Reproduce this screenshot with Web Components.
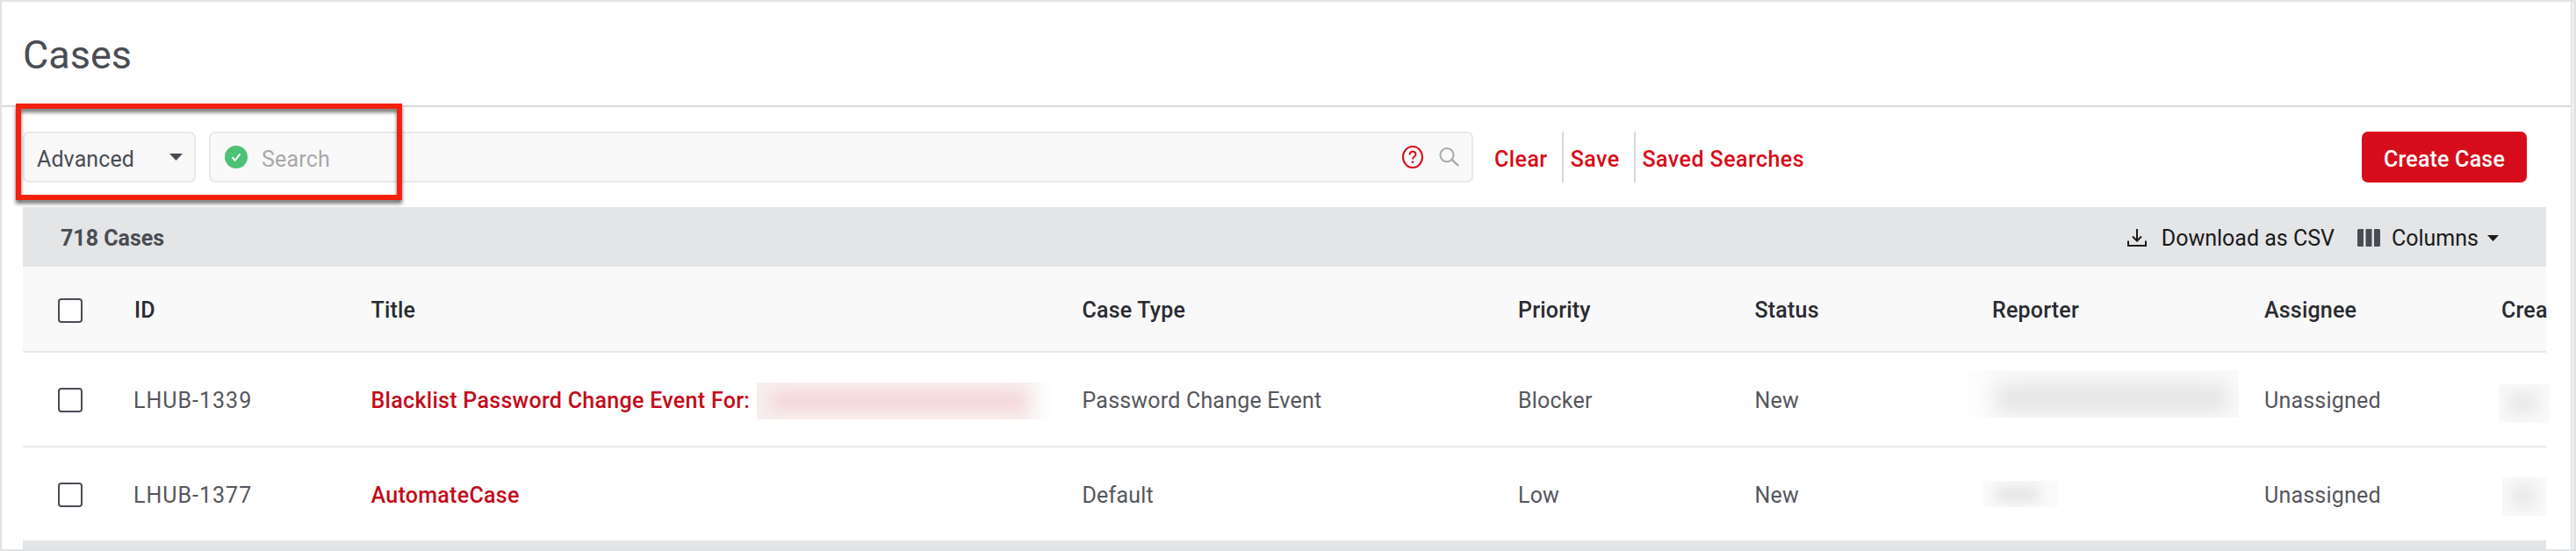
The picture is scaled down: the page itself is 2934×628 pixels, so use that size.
<!DOCTYPE html>
<html><head><meta charset="utf-8"><style>
html,body{margin:0;padding:0;background:#fff}
body{width:2934px;height:628px;overflow:hidden;font-family:"Roboto","Liberation Sans",sans-serif}
</style></head><body>
<cases-page></cases-page>
<script>
function def(name, html){
  customElements.define(name, class extends HTMLElement{
    constructor(){super();const r=this.attachShadow({mode:'open'});r.innerHTML=html;}
  });
}
const CARET=(w,h,c)=>`<svg width="${w}" height="${h}" viewBox="0 0 15 8" preserveAspectRatio="none" style="display:block"><path d="M0 0H15L7.5 8Z" fill="${c}"/></svg>`;

def('page-title',`<style>
:host{display:block;height:120px;box-sizing:border-box;padding:32px 0 0 24px;border-bottom:2px solid #d8d8d8}
h1{margin:0;font:400 45px/58px Roboto,sans-serif;color:#4a4c54;letter-spacing:0}
</style><h1><slot></slot></h1>`);

def('filter-select',`<style>
:host{display:flex;align-items:center;justify-content:space-between;box-sizing:border-box;width:197px;height:58px;padding:0 13px 0 14px;background:#f9f9f9;border:2px solid #e8e8e8;border-radius:7px;font:400 25px Roboto,sans-serif;color:#4a4c54;letter-spacing:.1px}
span{padding-top:4px}
</style><span><slot></slot></span>${CARET(15,8,'#4a4c54')}`);

def('search-box',`<style>
:host{display:flex;align-items:center;box-sizing:border-box;width:1440px;height:58px;margin-left:15px;padding:0 14px 0 16px;background:#f9f9f9;border:2px solid #e8e8e8;border-radius:7px;font:400 25px Roboto,sans-serif;color:#a8a8a8;letter-spacing:.2px}
.g{flex:none;display:block}
span{flex:1;margin-left:16px;padding-top:4px}
.q{margin-right:18px}
</style>
<svg class="g" width="26" height="26" viewBox="0 0 26 26"><circle cx="13" cy="13" r="13" fill="#4dc274"/><path d="M8.500 13.200l3.200 3.600 5.800-7.400" fill="none" stroke="#fff" stroke-width="2"/></svg>
<span><slot></slot></span>
<svg class="g q" width="24" height="26" viewBox="0 0 24 26"><ellipse cx="12" cy="13" rx="11" ry="12" fill="none" stroke="#d80c18" stroke-width="2"/><path d="M8.600 10.400c0-2.200 1.500-3.600 3.500-3.600s3.400 1.300 3.400 3.100c0 2.600-3.500 2.600-3.500 5.600" fill="none" stroke="#d80c18" stroke-width="1.900"/><circle cx="12" cy="18.700" r="1.300" fill="#d80c18"/></svg>
<svg class="g" width="23" height="22" viewBox="0 0 23 22"><circle cx="9" cy="8.600" r="7.600" fill="none" stroke="#aaa" stroke-width="2"/><path d="M14.600 13.800L22.200 21" fill="none" stroke="#aaa" stroke-width="2.400"/></svg>`);

def('link-action',`<style>
:host{display:flex;align-items:center;height:58px;box-sizing:border-box;padding:4px 16px 0 8px;font:500 25px Roboto,sans-serif;color:#d80c18;letter-spacing:.45px}
:host([sep]){border-right:2px solid #d8d8d8}
</style><slot></slot>`);

def('primary-button',`<style>
:host{display:flex;align-items:center;justify-content:center;box-sizing:border-box;width:188px;height:58px;padding-top:4px;background:#d70c1a;border-radius:7px;color:#fff;font:500 25px Roboto,sans-serif;letter-spacing:.2px}
</style><slot></slot>`);

def('search-bar',`<style>
:host{display:flex;align-items:flex-start;height:114px;box-sizing:border-box;padding:28px 50px 0 24px}
.acts{display:flex;margin-left:16px}
.sp{flex:1}
</style>
<filter-select>Advanced</filter-select>
<search-box>Search</search-box>
<div class="acts"><link-action sep>Clear</link-action><link-action sep>Save</link-action><link-action>Saved Searches</link-action></div>
<div class="sp"></div>
<primary-button>Create Case</primary-button>`);

def('table-toolbar',`<style>
:host{display:flex;align-items:center;height:68px;box-sizing:border-box;padding:2px 54px 0 43px;background:#e4e5e7;font:400 25px Roboto,sans-serif;color:#1a1a1a}
b{font-weight:700;color:#4a4c54;flex:1;letter-spacing:0}
.t{display:flex;align-items:center}
svg{display:block}
</style>
<b>718 Cases</b>
<span class="t"><svg width="22" height="20" viewBox="0 0 22 20" style="margin-right:17px"><path d="M11 0V13M6 8.500l5 5 5-5M1 13.500V19H21V13.500" fill="none" stroke="#1a1a1a" stroke-width="2"/></svg>Download as CSV</span>
<span class="t" style="margin-left:26px"><svg width="26" height="20" viewBox="0 0 26 20" style="margin-right:13px"><path d="M0 1.500a1.500 1.500 0 0 1 1.500-1.500H7V20H1.500a1.500 1.500 0 0 1-1.500-1.500ZM9.500 0H16.500V20H9.500ZM19 0H24.500A1.500 1.500 0 0 1 26 1.500V18.500A1.500 1.500 0 0 1 24.500 20H19Z" fill="#4a4c54"/></svg>Columns<svg width="13" height="7" viewBox="0 0 13 7" style="margin-left:10px"><path d="M0 0H13L6.500 7Z" fill="#1a1a1a"/></svg></span>`);

def('check-box',`<style>
:host{display:block;box-sizing:border-box;width:28px;height:28px;border:2px solid #4a4c54;border-radius:4px;background:#fff;margin-left:40px}
</style>`);

def('blur-mask',`<style>
:host{display:flex;box-sizing:border-box;overflow:hidden;align-self:center}
div{flex:1;background:var(--c);filter:blur(var(--r))}
</style><div></div>`);

const COLS='grid-template-columns:127px 269.500px 810px 496.500px 269.500px 270.500px 310px 270px 51px;';
def('table-row',`<style>
:host{display:grid;${COLS}align-items:center;height:108px;box-sizing:border-box;padding-top:2px;border-bottom:2px solid #e8e8e8;background:#fff;font:400 25px Roboto,sans-serif;color:#55565c;letter-spacing:.2px;white-space:nowrap}
:host([head]){height:98px;padding-top:3px;background:#f9f9f9;color:#2a2b30;font-weight:500}
:host([last]){height:106px;border-bottom:0}
</style><slot></slot>`);

def('case-id',`<style>:host{display:block;margin-left:-1px;letter-spacing:1px}</style><slot></slot>`);
def('case-link',`<style>
:host{display:flex;align-items:center;color:#c30c1a;font-weight:500;letter-spacing:.3px}
</style><slot></slot>`);

def('cases-table',`<style>
:host{display:block;margin:0 28px 0 24px}
.end{height:10px;background:#e4e5e7}
</style>
<table-toolbar></table-toolbar>
<table-row head><check-box></check-box><span>ID</span><span>Title</span><span>Case Type</span><span>Priority</span><span>Status</span><span>Reporter</span><span>Assignee</span><span>Crea</span></table-row>
<table-row><check-box></check-box><case-id>LHUB-1339</case-id><case-link>Blacklist Password Change Event For:<blur-mask style="width:336px;height:42px;margin:2px 0 0 8px;padding:12px 30px 11px 16px;background:linear-gradient(90deg,#f8eeee 0,#f8eeee 90%,#fff 100%);--c:#f4d3d5;--r:9px"></blur-mask></case-link><span>Password Change Event</span><span>Blocker</span><span>New</span><blur-mask style="width:322px;height:54px;margin:-14px 0 0 -41px;padding:16px 13px 6px 47px;background:linear-gradient(90deg,#fff 0,#fafafa 14%,#fafafa 100%);--c:#e4e4e4;--r:11px"></blur-mask><span>Unassigned</span><blur-mask style="width:58px;height:44px;margin:8px 0 0 -3px;padding:8px 14px 10px 10px;background:#f9f9f9;--c:#eaeaea;--r:7px"></blur-mask></table-row>
<table-row last><check-box></check-box><case-id>LHUB-1377</case-id><case-link>AutomateCase</case-link><span>Default</span><span>Low</span><span>New</span><blur-mask style="width:86px;height:30px;margin:-2px 0 0 -11px;padding:7px 22px 6px 16px;background:#fafafa;--c:#e4e4e4;--r:7px"></blur-mask><span>Unassigned</span><blur-mask style="width:50px;height:44px;margin:4px 0 0 1px;padding:8px 12px 10px 10px;background:#f9f9f9;--c:#eaeaea;--r:7px"></blur-mask></table-row>
<div class="end"></div>`);

def('highlight-box',`<style>
:host{position:absolute;left:18px;top:116px;width:440px;height:110px;box-sizing:border-box;border:6px solid #f41f0d;filter:drop-shadow(0 4px 2px rgba(0,0,0,.55));pointer-events:none}
</style>`);

def('cases-page',`<style>
:host{display:block;position:relative;width:2934px;height:628px;box-sizing:border-box;border:solid #dfe3e6;border-width:2px 3px 2px 0;background:#fff}
.frame{box-sizing:border-box;height:624px;width:2930px;border-left:2px solid #e2e2e2;border-right:2px solid #e2e2e2}
</style>
<div class="frame"><page-title>Cases</page-title><search-bar></search-bar><cases-table></cases-table></div>
<highlight-box></highlight-box>`);
</script>
</body></html>
